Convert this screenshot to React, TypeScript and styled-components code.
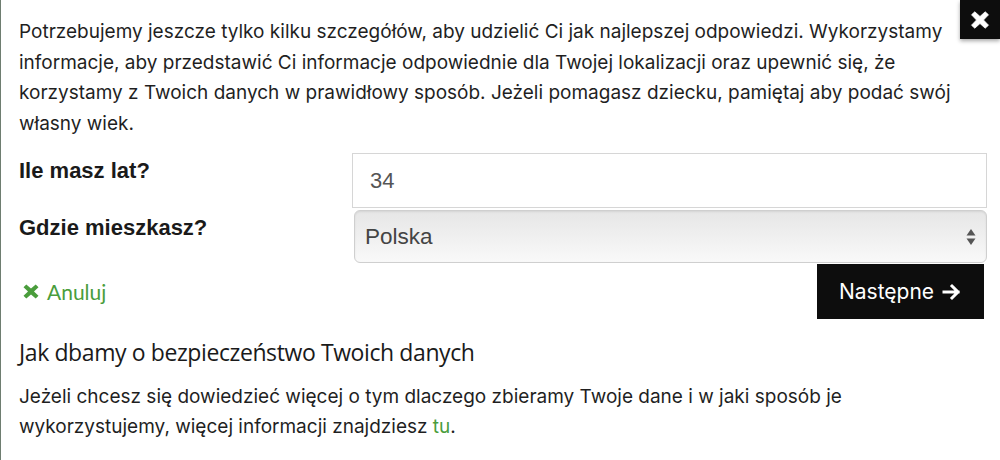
import styled, { createGlobalStyle } from "styled-components";

const GlobalStyle = createGlobalStyle`
  html, body {
    margin: 0;
    padding: 0;
    background: #ffffff;
  }
  body {
    font-family: Inter, "Liberation Sans", Arial, sans-serif;
    color: #1f1f1f;
  }
`;

const App = () => {
  return (
    <>
      <GlobalStyle />
      <Modal>
        <Close aria-label="Zamknij">
          <svg width="20" height="18" viewBox="0 0 20 18">
            <path
              d="M1.5 3.8 L4.8 0.8 L10 5.5 L15.2 0.8 L18.5 3.8 L13.5 9 L18.5 14.2 L15.2 17.2 L10 12.5 L4.8 17.2 L1.5 14.2 L6.5 9 Z"
              fill="#fff"
              stroke="#fff"
              strokeWidth="0.8"
              strokeLinejoin="round"
            />
          </svg>
        </Close>
        <Intro>
          Potrzebujemy jeszcze tylko kilku szczegółów, aby udzielić Ci jak
          najlepszej odpowiedzi. Wykorzystamy informacje, aby przedstawić Ci
          informacje odpowiednie dla Twojej lokalizacji oraz upewnić się, że
          korzystamy z Twoich danych w prawidłowy sposób. Jeżeli pomagasz
          dziecku, pamiętaj aby podać swój własny wiek.
        </Intro>
        <Form>
          <Label htmlFor="age">Ile masz lat?</Label>
          <Input id="age" defaultValue="34" />
          <Label htmlFor="country">Gdzie mieszkasz?</Label>
          <SelectWrap>
            <Select id="country" defaultValue="PL">
              <option value="PL">Polska</option>
            </Select>
            <Arrows width="10" height="18" viewBox="0 0 10 18">
              <path d="M5 1 L9.5 7.5 L0.5 7.5 Z" fill="#555" />
              <path d="M5 17 L9.5 10.5 L0.5 10.5 Z" fill="#555" />
            </Arrows>
          </SelectWrap>
        </Form>
        <Actions>
          <Cancel href="#">
            <svg width="18" height="15" viewBox="0 0 18 15">
              <path
                d="M1.5 3.2 L4.3 0.6 L9 4.6 L13.7 0.6 L16.5 3.2 L12 7.5 L16.5 11.8 L13.7 14.4 L9 10.4 L4.3 14.4 L1.5 11.8 L6 7.5 Z"
                fill="#4a9d3c"
              />
            </svg>
            Anuluj
          </Cancel>
          <Next type="button">
            Następne
            <svg width="20" height="18" viewBox="0 0 20 18">
              <path
                d="M2 9 H16 M10 3 L16 9 L10 15"
                stroke="#fff"
                strokeWidth="3"
                fill="none"
                strokeLinecap="square"
              />
            </svg>
          </Next>
        </Actions>
        <Heading>Jak dbamy o bezpieczeństwo Twoich danych</Heading>
        <Body>
          Jeżeli chcesz się dowiedzieć więcej o tym dlaczego zbieramy Twoje
          dane i w jaki sposób je wykorzystujemy, więcej informacji znajdziesz{" "}
          <Link href="#">tu</Link>.
        </Body>
      </Modal>
    </>
  );
};

const Modal = styled.div`
  position: relative;
  box-sizing: border-box;
  width: 1000px;
  height: 460px;
  padding: 17px 13px 0 18px;
  border-left: 1px solid #6e7d70;
  overflow: hidden;
`;

const Close = styled.button`
  position: absolute;
  top: 0;
  right: 0;
  width: 40px;
  height: 39px;
  border: none;
  padding: 0;
  background: #0d0d0d;
  box-shadow: 0 2px 4px rgba(0, 0, 0, 0.35);
  display: flex;
  align-items: center;
  justify-content: center;
`;

const Intro = styled.p`
  margin: 0;
  font-size: 19px;
  line-height: 30.6px;
  color: #1f1f1f;
  padding-right: 18px;
`;

const Form = styled.div`
  display: grid;
  grid-template-columns: 333px 1fr;
  row-gap: 2px;
  margin-top: 14px;
`;

const Label = styled.label`
  font-family: "Liberation Sans", Arial, sans-serif;
  font-size: 22px;
  font-weight: 700;
  color: #1a1a1a;
  padding-top: 5px;
  line-height: 26px;
`;

const Input = styled.input`
  box-sizing: border-box;
  height: 55px;
  width: 100%;
  border: 1px solid #d6d6d6;
  border-radius: 0;
  padding: 0 17px;
  font-family: "Liberation Sans", Arial, sans-serif;
  font-size: 22px;
  color: #555;
  outline: none;
`;

const SelectWrap = styled.div`
  position: relative;
  margin-left: 2px;
`;

const Select = styled.select`
  appearance: none;
  box-sizing: border-box;
  width: 100%;
  height: 53px;
  border: 1px solid #cfcfcf;
  border-radius: 6px;
  padding: 0 10px;
  font-family: "Liberation Sans", Arial, sans-serif;
  font-size: 22.5px;
  color: #444;
  background: linear-gradient(#e6e6e6, #f9f9f9);
  box-shadow: inset 0 1px 2px rgba(0, 0, 0, 0.08);
  outline: none;
`;

const Arrows = styled.svg`
  position: absolute;
  right: 11px;
  top: 18px;
  pointer-events: none;
`;

const Actions = styled.div`
  display: flex;
  justify-content: space-between;
  align-items: center;
  margin-top: 1px;
  padding-right: 3px;
`;

const Cancel = styled.a`
  display: flex;
  align-items: center;
  gap: 7px;
  padding-left: 3px;
  font-family: Lato, sans-serif;
  font-size: 21px;
  color: #4a9d3c;
  text-decoration: none;
`;

const Next = styled.button`
  display: flex;
  align-items: center;
  gap: 8px;
  height: 55px;
  width: 167px;
  justify-content: center;
  border: none;
  background: #0d0d0d;
  color: #fff;
  font-family: Inter, sans-serif;
  font-size: 21px;
`;

const Heading = styled.h2`
  margin: 18px 0 0;
  font-family: "Open Sans", sans-serif;
  font-weight: 500;
  font-size: 23px;
  line-height: 30px;
  color: #1a1a1a;
  letter-spacing: -0.4px;
`;

const Body = styled.p`
  margin: 15px 0 0;
  font-size: 19px;
  line-height: 30px;
  color: #1f1f1f;
  padding-right: 100px;
`;

const Link = styled.a`
  color: #4a9d3c;
  text-decoration: none;
`;

export default App;
